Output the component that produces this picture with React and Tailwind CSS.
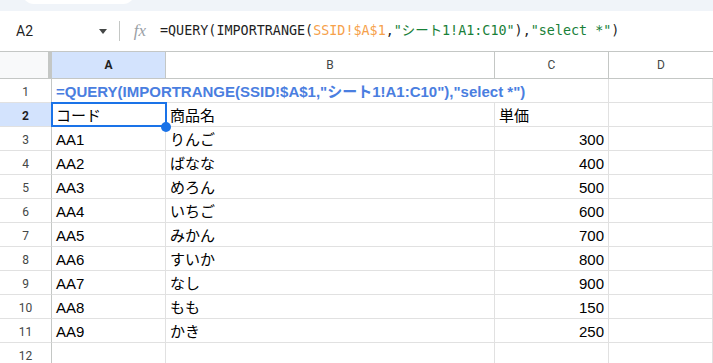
import React from "react";

const ROWS = [
  ["AA1", "りんご", 300],
  ["AA2", "ばなな", 400],
  ["AA3", "めろん", 500],
  ["AA4", "いちご", 600],
  ["AA5", "みかん", 700],
  ["AA6", "すいか", 800],
  ["AA7", "なし", 900],
  ["AA8", "もも", 150],
  ["AA9", "かき", 250],
];

const CELL_FONT = { fontFamily: '"Liberation Sans", Arial, "Noto Sans CJK JP", sans-serif' };
const UI_FONT = { fontFamily: 'Roboto, "Liberation Sans", "Noto Sans CJK JP", sans-serif' };
const MONO = { fontFamily: '"DejaVu Sans Mono", "Liberation Mono", "Noto Sans CJK JP", monospace' };

const COLS = "grid grid-cols-[52px_114px_329px_114px_1fr]";

function RowHead({ n, active }) {
  return (
    <div
      className={
        "h-6 border-b border-r border-b-[#e1e1e1] border-r-[#c4c7c5] flex items-center justify-center pt-[2px] text-[12px] " +
        (active ? "bg-[#d3e3fd] font-bold text-[#1f1f1f]" : "bg-white text-[#444746]")
      }
      style={UI_FONT}
    >
      {n}
    </div>
  );
}

function Cell({ children, right, className = "" }) {
  return (
    <div
      className={
        "h-6 border-b border-r border-[#e1e1e1] flex items-center px-1 pt-[2px] text-[15px] leading-none text-black whitespace-nowrap " +
        (right ? "justify-end " : "") +
        className
      }
      style={CELL_FONT}
    >
      {children}
    </div>
  );
}

function FormulaBar() {
  return (
    <div className="h-[41px] bg-white border-b border-[#c4c7c5] flex items-center" style={UI_FONT}>
      <div className="w-[119px] flex items-center pl-4 pr-3">
        <span className="text-[14px] text-[#1f1f1f]">A2</span>
        <span className="ml-auto w-0 h-0 border-l-[4px] border-r-[4px] border-t-[5px] border-l-transparent border-r-transparent border-t-[#444746]" />
      </div>
      <div className="w-px h-[20px] bg-[#c4c7c5]" />
      <div
        className="w-[40px] text-center text-[17px] italic text-[#9aa0a6]"
        style={{ fontFamily: '"Liberation Serif", serif' }}
      >
        fx
      </div>
      <div className="text-[13.4px] text-[#1f1f1f] whitespace-nowrap" style={MONO}>
        =QUERY(IMPORTRANGE(<span className="text-[#f6a14a]">SSID!$A$1</span>,
        <span className="text-[#188038]">"シート1!A1:C10"</span>),
        <span className="text-[#188038]">"select *"</span>)
      </div>
    </div>
  );
}

export default function App() {
  return (
    <div className="w-[713px] h-[363px] overflow-hidden bg-white">
      {/* top strip */}
      <div className="h-[11px] bg-[#f0f4f9] relative">
        <div className="absolute left-[22px] top-[-20px] w-[113px] h-[24px] rounded-[12px] bg-white" />
      </div>

      <FormulaBar />

      {/* column headers */}
      <div className={COLS + " h-[27px]"} style={UI_FONT}>
        <div className="bg-[#f8f9fa] border-b border-[#c4c7c5] flex">
          <div className="flex-1" />
          <div className="w-[4px] bg-[#c4c7c5]" />
        </div>
        <div className="bg-[#d3e3fd] border-b border-r border-[#c4c7c5] flex items-center justify-center text-[12px] font-bold text-[#1f1f1f]">
          A
        </div>
        <div className="bg-white border-b border-r border-[#c4c7c5] flex items-center justify-center text-[12px] text-[#444746]">
          B
        </div>
        <div className="bg-white border-b border-r border-[#c4c7c5] flex items-center justify-center text-[12px] text-[#444746]">
          C
        </div>
        <div className="bg-white border-b border-[#c4c7c5] flex items-center justify-center text-[12px] text-[#444746]">
          D
        </div>
      </div>

      {/* row 1 */}
      <div className={COLS}>
        <RowHead n={1} />
        <div className="col-span-3 h-6 border-b border-r border-[#e1e1e1] flex items-center px-1 pt-[2px] leading-none whitespace-nowrap text-[15px] font-bold text-[#4a7ee0]" style={CELL_FONT}>
          =QUERY(IMPORTRANGE(SSID!$A$1,"シート1!A1:C10"),"select *")
        </div>
        <Cell />
      </div>

      {/* row 2 */}
      <div className={COLS}>
        <RowHead n={2} active />
        <div className="relative">
          <Cell>コード</Cell>
          <div className="absolute left-[-1px] top-[-1px] right-[-1px] bottom-0 border-2 border-[#1a73e8] pointer-events-none" />
          <div className="absolute right-[-5px] bottom-[-5px] w-[10px] h-[10px] rounded-full bg-[#1a73e8]" />
        </div>
        <Cell>商品名</Cell>
        <Cell>単価</Cell>
        <Cell />
      </div>

      {ROWS.map((r, i) => (
        <div key={i} className={COLS}>
          <RowHead n={i + 3} />
          <Cell>{r[0]}</Cell>
          <Cell>{r[1]}</Cell>
          <Cell right>{r[2]}</Cell>
          <Cell />
        </div>
      ))}

      <div className={COLS}>
        <RowHead n={12} />
        <Cell />
        <Cell />
        <Cell />
        <Cell />
      </div>
    </div>
  );
}
